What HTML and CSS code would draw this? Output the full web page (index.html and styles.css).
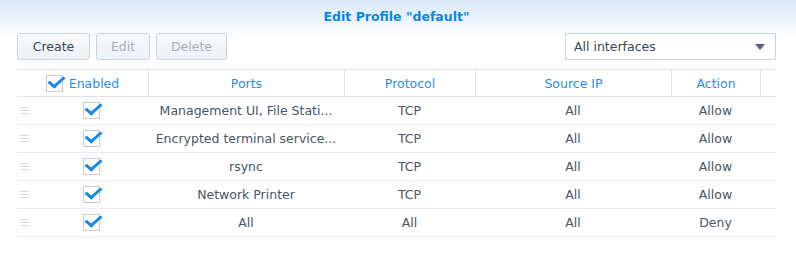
FILE: index.html
```html
<!DOCTYPE html>
<html lang="en">
<head>
    <meta charset="UTF-8">
    <title>Edit Profile</title>
    <link rel="stylesheet" href="styles.css">
</head>
<body>
    <div class="window">
        <h1 class="title">Edit Profile "default"</h1>

        <div class="toolbar">
            <button class="btn">Create</button>
            <button class="btn" disabled>Edit</button>
            <button class="btn" disabled>Delete</button>
            <div class="select">
                <span>All interfaces</span>
                <span class="caret"></span>
            </div>
        </div>

        <div class="grid">
            <div class="head">
                <div class="cell span2"><span class="check"></span>Enabled</div>
                <div class="cell">Ports</div>
                <div class="cell">Protocol</div>
                <div class="cell">Source IP</div>
                <div class="cell">Action</div>
                <div class="cell"></div>
            </div>

            <div class="row">
                <div class="cell"><span class="handle"></span></div>
                <div class="cell"><span class="check"></span></div>
                <div class="cell">Management UI, File Stati...</div>
                <div class="cell">TCP</div>
                <div class="cell">All</div>
                <div class="cell">Allow</div>
                <div class="cell"></div>
            </div>
            <div class="row">
                <div class="cell"><span class="handle"></span></div>
                <div class="cell"><span class="check"></span></div>
                <div class="cell">Encrypted terminal service...</div>
                <div class="cell">TCP</div>
                <div class="cell">All</div>
                <div class="cell">Allow</div>
                <div class="cell"></div>
            </div>
            <div class="row">
                <div class="cell"><span class="handle"></span></div>
                <div class="cell"><span class="check"></span></div>
                <div class="cell">rsync</div>
                <div class="cell">TCP</div>
                <div class="cell">All</div>
                <div class="cell">Allow</div>
                <div class="cell"></div>
            </div>
            <div class="row">
                <div class="cell"><span class="handle"></span></div>
                <div class="cell"><span class="check"></span></div>
                <div class="cell">Network Printer</div>
                <div class="cell">TCP</div>
                <div class="cell">All</div>
                <div class="cell">Allow</div>
                <div class="cell"></div>
            </div>
            <div class="row">
                <div class="cell"><span class="handle"></span></div>
                <div class="cell"><span class="check"></span></div>
                <div class="cell">All</div>
                <div class="cell">All</div>
                <div class="cell">All</div>
                <div class="cell">Deny</div>
                <div class="cell"></div>
            </div>
        </div>
    </div>
</body>
</html>
```

FILE: styles.css
```css
html, body {
    margin: 0;
    height: 100%;
    background: #fff;
    font-family: "DejaVu Sans", Verdana, sans-serif;
    font-size: 12.5px;
    color: #4a5563;
}

.window {
    height: 100%;
    padding: 0 20px 0 17px;
    background: linear-gradient(#d7e8f8 0, #ffffff 38px) no-repeat;
}

.title {
    margin: 0;
    padding-top: 9px;
    line-height: 16px;
    font-size: 12.5px;
    font-weight: bold;
    text-align: center;
    color: #0a86e2;
}

.toolbar {
    display: flex;
    align-items: center;
    gap: 6px;
    margin-top: 8px;
    height: 27px;
}

.btn {
    height: 27px;
    padding: 0;
    border: 1px solid #c9d3dc;
    border-radius: 3px;
    background: linear-gradient(#f7f9fb, #eef2f6);
    font-family: inherit;
    font-size: 12.5px;
    color: #3c4654;
}

.btn:first-child {
    width: 73px;
}

.btn:nth-child(2) {
    width: 54px;
}

.btn:nth-child(3) {
    width: 71px;
}

.btn:disabled {
    color: #a5aeb8;
}

.select {
    margin-left: auto;
    width: 211px;
    height: 27px;
    box-sizing: border-box;
    border: 1px solid #c9d3dc;
    display: flex;
    align-items: center;
    justify-content: space-between;
    padding: 0 10px 0 8px;
    color: #3c4654;
}

.caret {
    width: 0;
    height: 0;
    border-left: 5px solid transparent;
    border-right: 5px solid transparent;
    border-top: 6px solid #56606b;
}

.grid {
    margin-top: 9px;
}

.head, .row {
    display: grid;
    grid-template-columns: 18px 113px 196px 131px 196px 89px 16px;
}

.head {
    height: 26px;
    border-top: 1px solid #dce5ed;
    border-bottom: 1px solid #dce5ed;
    color: #1f8ee6;
}

.head .cell + .cell {
    border-left: 1px solid #d7e5f1;
}

.head .span2 {
    grid-column: span 2;
}

.row {
    height: 27px;
    border-bottom: 1px solid #e5eaef;
}

.cell {
    display: flex;
    align-items: center;
    justify-content: center;
    white-space: nowrap;
    overflow: hidden;
}

.row .cell:first-child {
    justify-content: flex-start;
    padding-left: 3px;
}

.handle {
    width: 9px;
    height: 7px;
    background: linear-gradient(#d3d9df 1px, transparent 1px) 0 0 / 9px 3px;
}

.check {
    position: relative;
    width: 17px;
    height: 17px;
    box-sizing: border-box;
    border: 1px solid #c4cdd6;
    background: #fff;
}

.head .check {
    margin-right: 6px;
}

.check::after {
    content: "";
    position: absolute;
    left: 5px;
    top: -3px;
    width: 6px;
    height: 12px;
    border-right: 3px solid #138ae6;
    border-bottom: 3px solid #138ae6;
    transform: rotate(40deg) skewX(-8deg);
}
```
